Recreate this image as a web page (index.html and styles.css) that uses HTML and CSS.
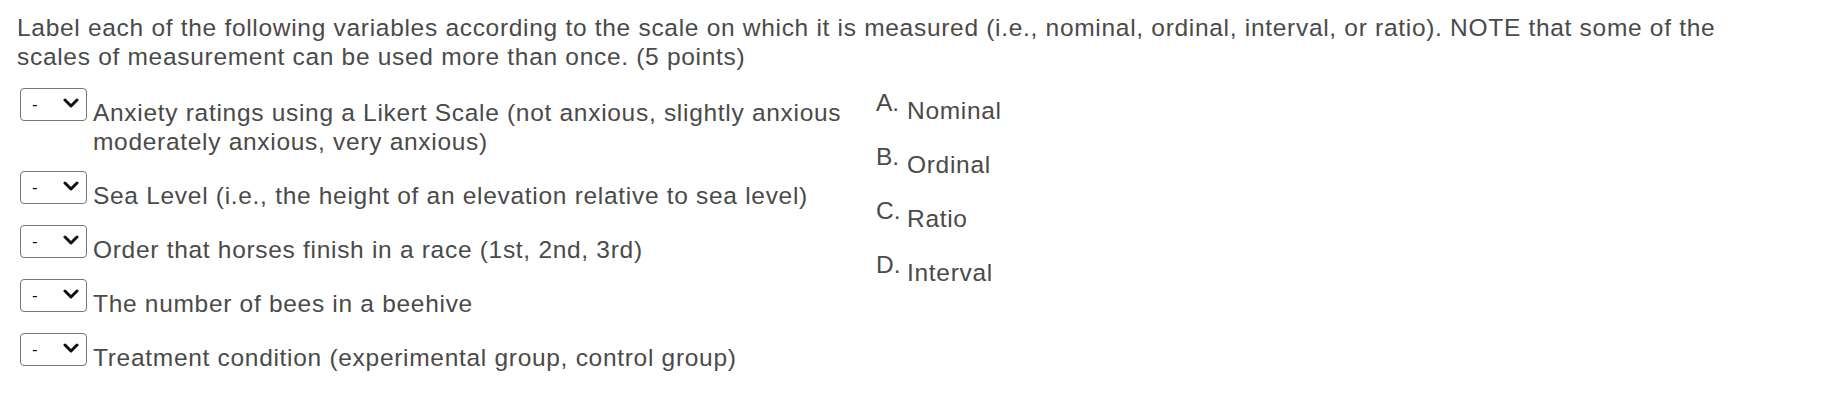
FILE: index.html
```html
<!DOCTYPE html>
<html>
<head>
<meta charset="utf-8">
<link rel="stylesheet" href="styles.css">
</head>
<body>
<div class="question">
  <p class="prompt">Label each of the following variables according to the scale on which it is measured (i.e., nominal, ordinal, interval, or ratio). NOTE that some of the scales of measurement can be used more than once. (5 points)</p>
  <div class="matching">
    <div class="items">
      <div class="item">
        <span class="select"><span class="dash">-</span><svg class="chev" viewBox="0 0 16 11" width="16" height="11"><path d="M2 2 L8 8 L14 2" fill="none" stroke="#111" stroke-width="3" stroke-linecap="round" stroke-linejoin="round"/></svg></span>
        <span class="item-text">Anxiety ratings using a Likert Scale (not anxious, slightly anxious moderately anxious, very anxious)</span>
      </div>
      <div class="item">
        <span class="select"><span class="dash">-</span><svg class="chev" viewBox="0 0 16 11" width="16" height="11"><path d="M2 2 L8 8 L14 2" fill="none" stroke="#111" stroke-width="3" stroke-linecap="round" stroke-linejoin="round"/></svg></span>
        <span class="item-text">Sea Level (i.e., the height of an elevation relative to sea level)</span>
      </div>
      <div class="item">
        <span class="select"><span class="dash">-</span><svg class="chev" viewBox="0 0 16 11" width="16" height="11"><path d="M2 2 L8 8 L14 2" fill="none" stroke="#111" stroke-width="3" stroke-linecap="round" stroke-linejoin="round"/></svg></span>
        <span class="item-text">Order that horses finish in a race (1st, 2nd, 3rd)</span>
      </div>
      <div class="item">
        <span class="select"><span class="dash">-</span><svg class="chev" viewBox="0 0 16 11" width="16" height="11"><path d="M2 2 L8 8 L14 2" fill="none" stroke="#111" stroke-width="3" stroke-linecap="round" stroke-linejoin="round"/></svg></span>
        <span class="item-text">The number of bees in a beehive</span>
      </div>
      <div class="item">
        <span class="select"><span class="dash">-</span><svg class="chev" viewBox="0 0 16 11" width="16" height="11"><path d="M2 2 L8 8 L14 2" fill="none" stroke="#111" stroke-width="3" stroke-linecap="round" stroke-linejoin="round"/></svg></span>
        <span class="item-text">Treatment condition (experimental group, control group)</span>
      </div>
    </div>
    <ol class="answers">
      <li class="answer"><span class="letter">A.</span><span class="answer-text">Nominal</span></li>
      <li class="answer"><span class="letter">B.</span><span class="answer-text">Ordinal</span></li>
      <li class="answer"><span class="letter">C.</span><span class="answer-text">Ratio</span></li>
      <li class="answer"><span class="letter">D.</span><span class="answer-text">Interval</span></li>
    </ol>
  </div>
</div>
</body>
</html>
```

FILE: styles.css
```css
html, body {
  margin: 0;
  padding: 0;
  background: #ffffff;
}

body {
  font-family: "Liberation Sans", Arial, Helvetica, sans-serif;
  font-size: 24.5px;
  letter-spacing: 0.7px;
  color: #4a4a4a;
}

.question {
  padding: 13px 17px 0 17px;
}

.prompt {
  margin: 0;
  line-height: 29px;
  max-width: 1760px;
}

.matching {
  display: flex;
  align-items: flex-start;
  margin-top: 25px;
}

.items {
  width: 856px;
  padding-left: 3px;
  padding-top: 2px;
  display: flex;
  flex-direction: column;
  gap: 25px;
}

.item {
  display: flex;
  align-items: flex-start;
}

.select {
  flex: none;
  box-sizing: border-box;
  width: 67px;
  height: 33px;
  border: 1px solid #767676;
  border-radius: 4px;
  display: flex;
  align-items: center;
  padding: 0 7px 0 11px;
  justify-content: space-between;
  color: #111;
  font-size: 17px;
  letter-spacing: 0;
  margin-top: -10px;
}

.dash {
  line-height: 1;
}

.chev {
  display: block;
  margin-top: -2px;
}

.item-text {
  margin-left: 6px;
  line-height: 29px;
}

.answers {
  list-style: none;
  margin: 0;
  padding: 0;
  display: flex;
  flex-direction: column;
  gap: 25px;
}

.answer {
  line-height: 29px;
  display: flex;
  align-items: baseline;
}

.letter {
  position: relative;
  top: -8px;
  width: 31px;
  flex: none;
  letter-spacing: 0;
}
```
